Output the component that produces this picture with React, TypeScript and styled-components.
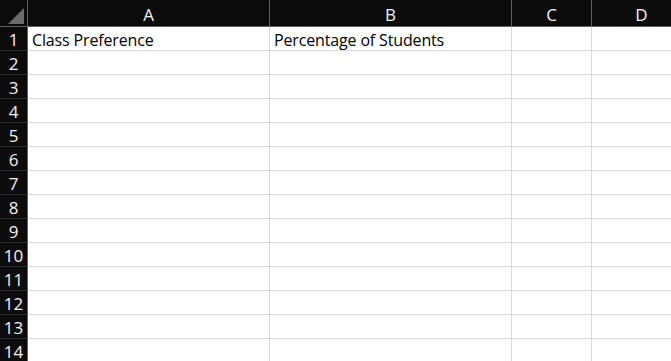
import React from "react";
import styled, { createGlobalStyle } from "styled-components";

const Global = createGlobalStyle`
  html, body { margin: 0; padding: 0; background: #ffffff; overflow: hidden; }
  #root { width: 671px; height: 361px; overflow: hidden; }
`;

const Sheet = styled.div`
  display: grid;
  grid-template-columns: 28px 242px 242px 80px 100px;
  grid-auto-rows: 24px;
  grid-template-rows: 27px;
  width: 692px;
  background: #ffffff;
`;

const Corner = styled.div`
  box-sizing: border-box;
  background: #0b0b0b;
  border-right: 1px solid #5f5f5f;
  border-bottom: 1px solid #5f5f5f;
  display: flex;
  align-items: flex-end;
  justify-content: flex-end;
  padding: 0 3px 2px 0;
`;

const ColHead = styled.div`
  box-sizing: border-box;
  background: #0b0b0b;
  border-right: 1px solid #5f5f5f;
  border-bottom: 1px solid #5f5f5f;
  color: #f2f2f2;
  font-family: "Open Sans", "Liberation Sans", sans-serif;
  font-size: 17px;
  display: flex;
  align-items: center;
  justify-content: center;
  padding-top: 3px;
`;

const RowHead = styled.div`
  box-sizing: border-box;
  background: #0b0b0b;
  border-right: 1px solid #5f5f5f;
  border-bottom: 1px solid #2a2a2a;
  color: #f2f2f2;
  font-family: "Open Sans", "Liberation Sans", sans-serif;
  font-size: 17px;
  line-height: 18px;
  display: flex;
  align-items: center;
  justify-content: center;
  padding-top: 2px;
`;

const Cell = styled.div`
  box-sizing: border-box;
  border-right: 1px solid #d9d9d9;
  border-bottom: 1px solid #d9d9d9;
  color: #000000;
  font-family: "Open Sans", "Liberation Sans", sans-serif;
  font-size: 16px;
  line-height: 20px;
  letter-spacing: -0.15px;
  display: flex;
  align-items: flex-end;
  padding: 0 0 0 4px;
  white-space: nowrap;
  overflow: hidden;
`;

const cols = ["A", "B", "C", "D"];
const rows = Array.from({ length: 14 }, (_, i) => i + 1);
const data: Record<string, string> = {
  A1: "Class Preference",
  B1: "Percentage of Students",
};

export default function App() {
  return (
    <>
      <Global />
      <Sheet>
        <Corner>
          <svg width="16" height="16" viewBox="0 0 16 16">
            <polygon points="16,0 16,16 0,16" fill="#6b6b6b" />
          </svg>
        </Corner>
        {cols.map((c) => (
          <ColHead key={c}>{c}</ColHead>
        ))}
        {rows.map((r) => (
          <React.Fragment key={r}>
            <RowHead>{r}</RowHead>
            {cols.map((c) => (
              <Cell key={c + r}>{data[c + r] ?? ""}</Cell>
            ))}
          </React.Fragment>
        ))}
      </Sheet>
    </>
  );
}
